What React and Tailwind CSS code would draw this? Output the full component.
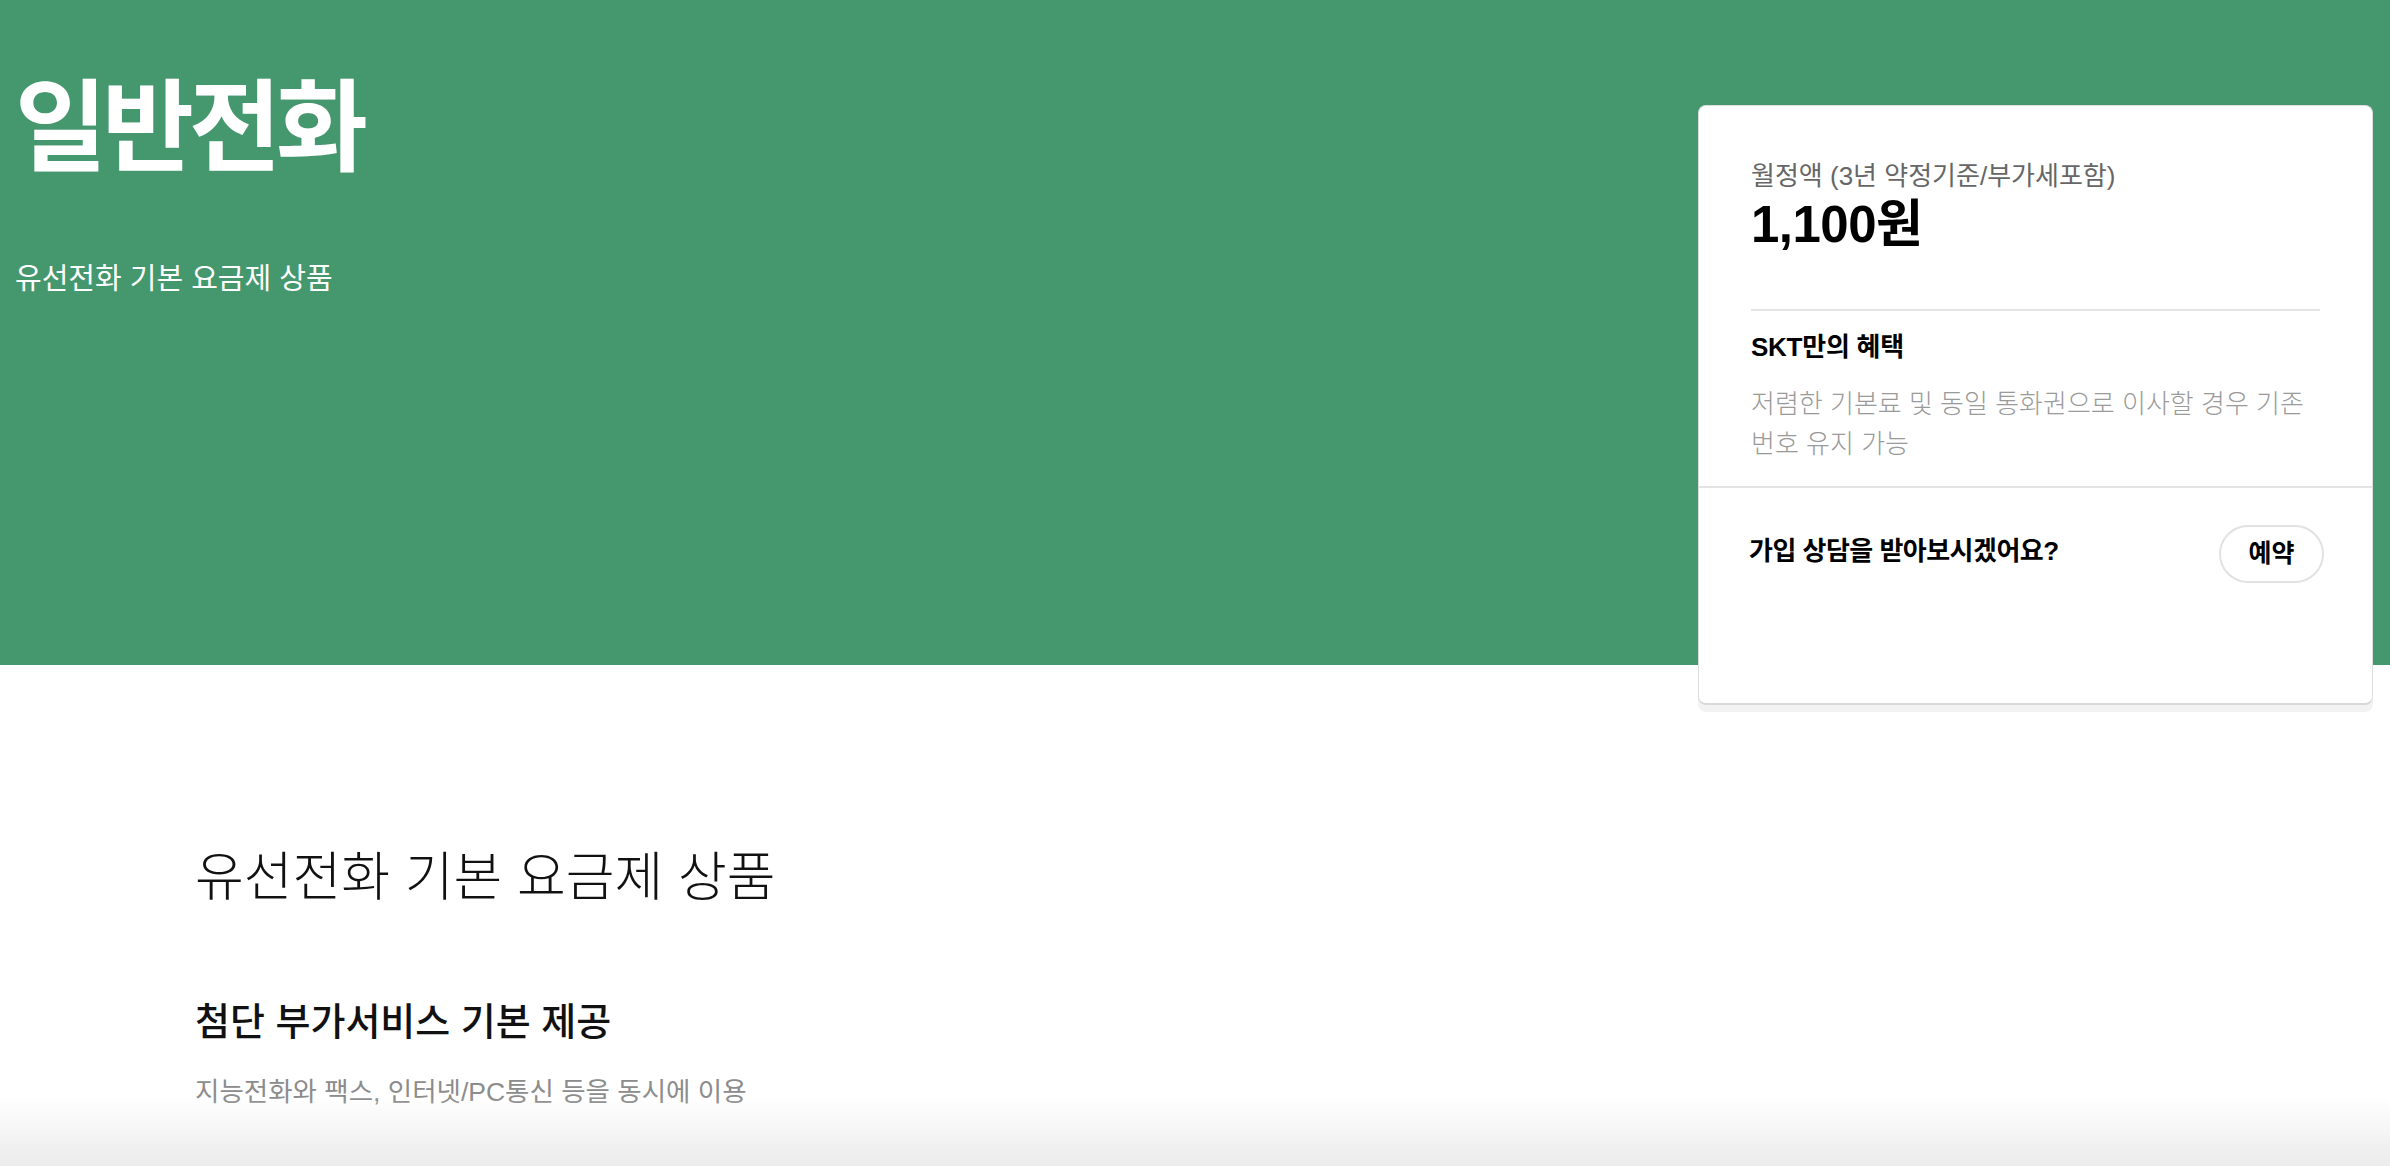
export default function App() {
  const font = "font-['Liberation_Sans','Noto_Sans_CJK_KR',sans-serif]";
  return (
    <div className={`relative min-h-screen bg-white ${font}`}>
      <section className="h-[665px] bg-[#45976e] pl-[15px] pt-[78px] text-white">
        <h1 className="text-[100px] font-bold leading-none tracking-[-0.05em]">일반전화</h1>
        <p className="mt-[87px] text-[29px] leading-none">유선전화 기본 요금제 상품</p>
      </section>

      <section className="pl-[195px] pt-[186px]">
        <h2 className="text-[53px] font-light leading-none text-[#111]">유선전화 기본 요금제 상품</h2>
        <h3 className="mt-[99px] text-[38px] font-medium leading-none text-[#111]">첨단 부가서비스 기본 제공</h3>
        <p className="mt-[38px] text-[26.5px] leading-none text-[#8c8c8c]">지능전화와 팩스, 인터넷/PC통신 등을 동시에 이용</p>
      </section>

      <aside className="absolute right-[17px] top-[105px] h-[600px] w-[675px] rounded-[8px] border border-[#dedede] border-b-2 border-b-[#d9d9d9] bg-white shadow-[0_7px_0_#f2f2f2]">
        <div className="px-[52px] pt-[57px]">
          <p className="text-[26px] leading-none text-[#666]">월정액 (3년 약정기준/부가세포함)</p>
          <p className="mt-[10px] text-[51px] font-bold leading-none tracking-[-0.01em] text-black">1,100원</p>
          <div className="mt-[59px] h-[2px] bg-[#e4e4e4]" />
          <p className="mt-[23px] text-[26px] font-bold leading-none tracking-[-0.01em] text-black">SKT만의 혜택</p>
          <p className="mt-[24px] text-[26px] font-light leading-[40px] text-[#9a9a9a]">저렴한 기본료 및 동일 통화권으로 이사할 경우 기존 번호 유지 가능</p>
        </div>
        <div className="mt-[22px] h-[2px] bg-[#e4e4e4]" />
        <div className="flex items-center justify-between pl-[50px] pr-[48px] pt-[37px]">
          <p className="-mt-[6px] text-[26px] font-bold leading-none tracking-[-0.02em] text-black">가입 상담을 받아보시겠어요?</p>
          <button className="flex h-[58px] w-[105px] items-center justify-center rounded-full border-2 border-[#e2e2e2] bg-white text-[25px] font-bold text-black">예약</button>
        </div>
      </aside>

      <div className="pointer-events-none fixed bottom-0 left-0 right-0 h-[70px] bg-linear-to-b from-[rgba(255,255,255,0)] to-[#ebebeb]" />
    </div>
  );
}
